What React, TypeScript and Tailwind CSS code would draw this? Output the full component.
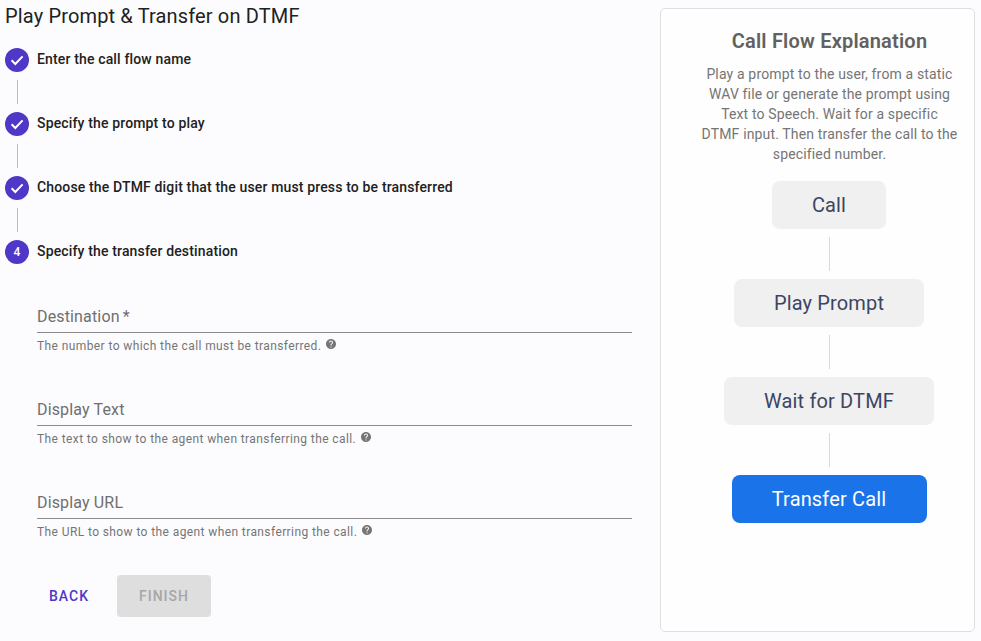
import React from 'react';

const Check = () => (
  <svg viewBox="0 0 24 24" className="w-6 h-6">
    <circle cx="12" cy="12" r="12" fill="#4f38c7" />
    <path d="M6.6 12.3l3.7 3.7 7.3-7.6" fill="none" stroke="#fff" strokeWidth="2" />
  </svg>
);

const Help = () => (
  <svg viewBox="0 0 24 24" className="w-3 h-3" fill="#757575">
    <path d="M12 2C6.48 2 2 6.48 2 12s4.48 10 10 10 10-4.48 10-10S17.52 2 12 2zm1 17h-2v-2h2v2zm2.07-7.75l-.9.92C13.45 12.9 13 13.5 13 15h-2v-.5c0-1.1.45-2.1 1.17-2.83l1.24-1.26c.37-.36.59-.86.59-1.41 0-1.1-.9-2-2-2s-2 .9-2 2H8c0-2.21 1.79-4 4-4s4 1.79 4 4c0 .88-.36 1.68-.93 2.25z" />
  </svg>
);

const steps = [
  'Enter the call flow name',
  'Specify the prompt to play',
  'Choose the DTMF digit that the user must press to be transferred',
  'Specify the transfer destination',
];

const fields = [
  { label: 'Destination', required: true, help: 'The number to which the call must be transferred.' },
  { label: 'Display Text', required: false, help: 'The text to show to the agent when transferring the call.' },
  { label: 'Display URL', required: false, help: 'The URL to show to the agent when transferring the call.' },
];

const FlowBox = ({ label, width, active }: { label: string; width: string; active?: boolean }) => (
  <div
    className={`${width} h-12 flex items-center justify-center rounded-lg text-xl tracking-[0.15px] ${
      active ? 'bg-[#1a73e8] text-white' : 'bg-[#f0f0f0] text-[#3c4563]'
    }`}
  >
    {label}
  </div>
);

const Connector = () => <div className="w-px h-[34px] my-2 bg-[#d9d9d9]" />;

export default function App() {
  return (
    <div className="w-[981px] h-[641px] overflow-hidden bg-[#fcfcff] flex font-['Roboto',sans-serif]">
      <div className="w-[660px] shrink-0 pl-[5px]">
        <h1 className="h-12 pt-[3px] text-xl leading-[26px] tracking-[0.15px] text-[#212121]">
          Play Prompt &amp; Transfer on DTMF
        </h1>

        {steps.map((step, i) => (
          <div key={step}>
            <div className="flex items-center gap-2 h-6">
              {i < 3 ? (
                <Check />
              ) : (
                <div className="w-6 h-6 rounded-full bg-[#4f38c7] text-white text-xs font-medium flex items-center justify-center">
                  4
                </div>
              )}
              <span className="text-sm font-medium tracking-[0.15px] text-[#212121] -mt-[3px]">{step}</span>
            </div>
            {i < 3 && <div className="ml-3 w-px h-6 my-2 bg-[#bdbdbd]" />}
          </div>
        ))}

        <div className="ml-8 w-[595px] mt-[33px]">
          {fields.map((f) => (
            <div key={f.label} className="h-[93px]">
              <div className="h-[36px] pt-2 border-b border-[#8a8a8a] text-base leading-[24px] tracking-[0.15px] text-[#6f6f6f]">
                {f.label}
                {f.required && <span className="ml-[3px]">*</span>}
              </div>
              <div className="flex items-start gap-1 mt-[3px] text-xs leading-5 tracking-[0.4px] text-[#757575]">
                <span>{f.help}</span>
                <span className="mt-[2px]">
                  <Help />
                </span>
              </div>
            </div>
          ))}
        </div>

        <div className="ml-8 -mt-px flex items-center">
          <button className="w-16 h-[42px] text-sm font-medium tracking-[1px] text-[#4f38c7]">BACK</button>
          <button className="ml-4 w-[94px] h-[42px] rounded bg-[#dedede] text-sm font-medium tracking-[1px] text-[#a6a6a6]">
            FINISH
          </button>
        </div>
      </div>

      <div className="mt-2 w-[315px] h-[624px] rounded-[5px] border border-[#e0e0e0] bg-[#fefefe] pl-6 flex flex-col items-center">
        <h2 className="mt-[19px] text-xl leading-[26px] font-semibold tracking-[0.2px] text-[#616161]">
          Call Flow Explanation
        </h2>
        <p className="mt-[10px] w-[258px] text-sm leading-5 tracking-[0.15px] text-center text-[#757575]">
          Play a prompt to the user, from a static WAV file or generate the prompt using Text to Speech. Wait for a
          specific DTMF input. Then transfer the call to the specified number.
        </p>
        <div className="mt-[17px] -ml-px flex flex-col items-center">
          <FlowBox label="Call" width="w-[114px]" />
          <Connector />
          <FlowBox label="Play Prompt" width="w-[190px]" />
          <Connector />
          <FlowBox label="Wait for DTMF" width="w-[210px]" />
          <Connector />
          <FlowBox label="Transfer Call" width="w-[195px]" active />
        </div>
      </div>
    </div>
  );
}
